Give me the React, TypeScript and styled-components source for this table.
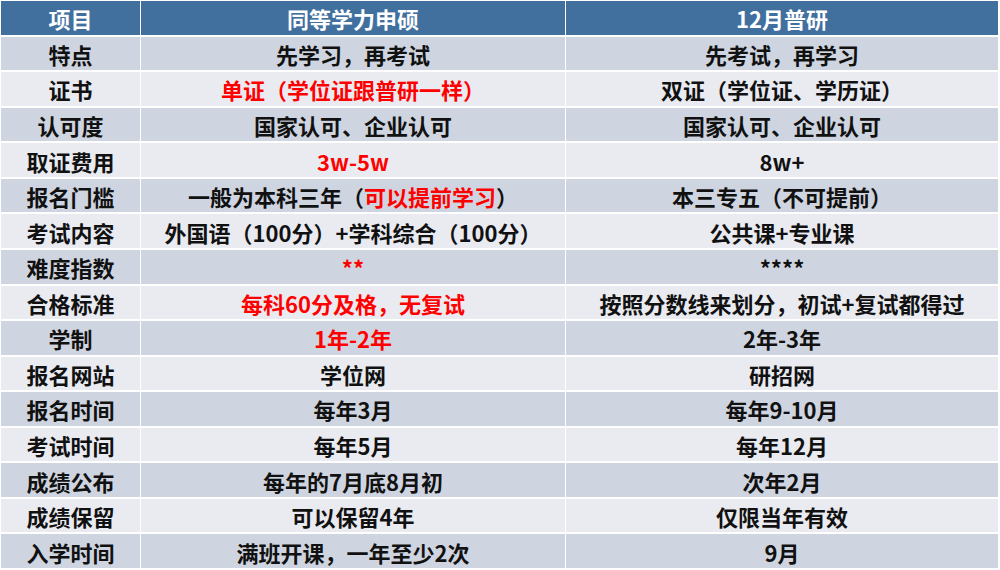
import styled, { createGlobalStyle } from 'styled-components';
import type { ReactNode } from 'react';

const GlobalStyle = createGlobalStyle`
  html, body {
    margin: 0;
    padding: 0;
    background: #ffffff;
  }
  body {
    font-family: "Noto Sans CJK SC", "Noto Sans", sans-serif;
  }
`;

const Page = styled.div`
  width: 1000px;
  height: 570px;
  padding: 1px 2px 2px 1px;
  box-sizing: border-box;
  background: #ffffff;
`;

const Table = styled.div`
  display: grid;
  grid-template-columns: 139px 424px 1fr;
  grid-template-rows: repeat(16, 1fr);
  column-gap: 1px;
  row-gap: 2px;
  height: 100%;
`;

type Tone = 'head' | 'dark' | 'light';

const toneBg: Record<Tone, string> = {
  head: '#41709f',
  dark: '#cfd5e0',
  light: '#e9ebf1',
};

const Cell = styled.div<{ $tone: Tone }>`
  display: flex;
  align-items: center;
  justify-content: center;
  padding-top: 1px;
  background: ${(p) => toneBg[p.$tone]};
  color: ${(p) => (p.$tone === 'head' ? '#ffffff' : '#111111')};
  font-size: 22px;
  font-weight: 700;
  line-height: 1;
  white-space: nowrap;
`;

const Red = styled.span`
  color: #ff0000;
`;

type Row = [string, ReactNode, ReactNode];

const rows: Row[] = [
  ['特点', '先学习，再考试', '先考试，再学习'],
  ['证书', <Red>单证（学位证跟普研一样）</Red>, '双证（学位证、学历证）'],
  ['认可度', '国家认可、企业认可', '国家认可、企业认可'],
  ['取证费用', <Red>3w-5w</Red>, '8w+'],
  ['报名门槛', <>一般为本科三年（<Red>可以提前学习</Red>）</>, '本三专五（不可提前）'],
  ['考试内容', '外国语（100分）+学科综合（100分）', '公共课+专业课'],
  ['难度指数', <Red>**</Red>, '****'],
  ['合格标准', <Red>每科60分及格，无复试</Red>, '按照分数线来划分，初试+复试都得过'],
  ['学制', <Red>1年-2年</Red>, '2年-3年'],
  ['报名网站', '学位网', '研招网'],
  ['报名时间', '每年3月', '每年9-10月'],
  ['考试时间', '每年5月', '每年12月'],
  ['成绩公布', '每年的7月底8月初', '次年2月'],
  ['成绩保留', '可以保留4年', '仅限当年有效'],
  ['入学时间', '满班开课，一年至少2次', '9月'],
];

export default function App() {
  return (
    <>
      <GlobalStyle />
      <Page>
        <Table>
          <Cell $tone="head">项目</Cell>
          <Cell $tone="head">同等学力申硕</Cell>
          <Cell $tone="head">12月普研</Cell>
          {rows.map((row, i) => {
            const tone: Tone = i % 2 === 0 ? 'dark' : 'light';
            return row.map((content, j) => (
              <Cell key={`${i}-${j}`} $tone={tone}>
                {content}
              </Cell>
            ));
          })}
        </Table>
      </Page>
    </>
  );
}
